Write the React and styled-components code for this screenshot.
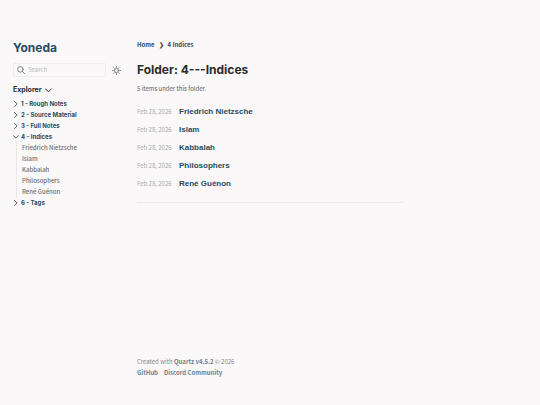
import React from "react";
import styled, { createGlobalStyle } from "styled-components";

const body = '"Noto Sans CJK SC", "Noto Sans", sans-serif';
const heading = 'Inter, "Liberation Sans", sans-serif';

const GlobalStyle = createGlobalStyle`
  * { box-sizing: border-box; }
  body { margin: 0; background: #faf8f8; color: #5c5b5b; font-family: ${body}; font-size: 6px; }
  a { color: inherit; text-decoration: none; }
  button, input { font: inherit; color: inherit; background: none; border: 0; padding: 0; margin: 0; }
  button { cursor: pointer; }
  ul { list-style: none; margin: 0; padding: 0; }
`;

const Page = styled.div`
  display: grid;
  grid-template-columns: 108px minmax(0, 1fr) 108px;
  gap: 16px;
  min-height: 100vh;
  padding: 0 13px;
`;

const Sidebar = styled.aside`
  display: flex;
  flex-direction: column;
  padding-top: 40px;
`;

const SiteTitle = styled.h2`
  margin: 0;
  font: 700 12px/16px ${heading};
  color: #284b63;
`;

const Tools = styled.div`
  display: flex;
  align-items: center;
  gap: 6px;
  margin-top: 7px;
`;

const SearchBox = styled.label`
  flex: 1;
  min-width: 0;
  display: flex;
  align-items: center;
  gap: 3px;
  height: 14px;
  padding: 0 3px;
  border: 1px solid #eeecec;
  border-radius: 2px;
  color: #6b6a6a;
`;

const SearchInput = styled.input`
  flex: 1;
  min-width: 0;
  font-size: 6px;
  line-height: 10px;
  outline: 0;
  &::placeholder { color: #b8b8b8; opacity: 1; }
`;

const IconButton = styled.button`
  display: flex;
`;

const ExplorerToggle = styled.button`
  display: flex;
  align-items: center;
  gap: 3px;
  align-self: flex-start;
  margin-top: 8px;
  font: 700 7px/10px ${heading};
  color: #2b2b2b;
`;

const Tree = styled.ul`
  margin-top: 3px;
`;

const Folder = styled.button`
  display: flex;
  align-items: center;
  gap: 2px;
  height: 11px;
  font: 700 6px/11px ${heading};
  color: #284b63;
`;

const Leaves = styled.ul`
  margin-left: 3px;
  padding-left: 5px;
  border-left: 1px solid #e9e7e7;
`;

const Leaf = styled.li`
  font-size: 6px;
  font-weight: 500;
  line-height: 11px;
  height: 11px;
  color: #717070;
`;

const Center = styled.main`
  display: flex;
  flex-direction: column;
  padding-top: 40px;
`;

const Crumbs = styled.nav`
  display: flex;
  gap: 4px;
  font-size: 6px;
  font-weight: 700;
  line-height: 10px;
  color: #284b63;
`;

const CrumbMark = styled.span`
  color: #4e4e4e;
`;

const PageTitle = styled.h1`
  margin: 12px 0 0;
  font: 700 12px/16px ${heading};
  color: #2b2b2b;
`;

const Count = styled.p`
  margin: 6px 0 0;
  line-height: 10px;
`;

const Listing = styled.ul`
  display: grid;
  gap: 8px;
  margin-top: 13px;
`;

const Entry = styled.li`
  display: grid;
  grid-template-columns: 36px 1fr;
  gap: 6px;
  align-items: center;
`;

const EntryDate = styled.time`
  line-height: 10px;
  white-space: nowrap;
  color: #a9a8a8;
`;

const EntryTitle = styled.h3`
  margin: 0;
  font: 700 8px/10px "Liberation Sans", sans-serif;
  color: #284b63;
`;

const Rule = styled.hr`
  width: 100%;
  height: 1px;
  margin: 13px 0 0;
  border: 0;
  background: #ebe9e9;
`;

const Footer = styled.footer`
  margin-top: auto;
  padding-bottom: 27px;
  line-height: 11px;
  color: #868585;
`;

const FooterText = styled.p`
  margin: 0;
`;

const FooterLink = styled.a`
  && { color: #6a8191; }
  font-weight: 700;
`;

const FooterLinks = styled.div`
  display: flex;
  gap: 6px;
`;

const Glyph = styled.svg`
  flex: none;
  fill: none;
  stroke: currentColor;
  stroke-linecap: round;
  stroke-linejoin: round;
`;

const Chevron = ({ open, size = 6 }) => (
  <Glyph width={size} height={size} viewBox="4 4 16 16" strokeWidth="2.2">
    <path d={open ? "M5 8l7 7 7-7" : "M8 5l7 7-7 7"} />
  </Glyph>
);

const folders = [
  { name: "1 - Rough Notes" },
  { name: "2 - Source Material" },
  { name: "3 - Full Notes" },
  { name: "4 - Indices", open: true },
  { name: "6 - Tags" },
];
const notes = ["Friedrich Nietzsche", "Islam", "Kabbalah", "Philosophers", "René Guénon"];

export default function App() {
  return (
    <>
      <GlobalStyle />
      <Page>
        <Sidebar>
          <SiteTitle><a href="#home">Yoneda</a></SiteTitle>
          <Tools>
            <SearchBox>
              <Glyph width="8" height="8" viewBox="0 0 20 20" strokeWidth="2">
                <circle cx="8.5" cy="8.5" r="7" />
                <path d="M13.5 13.5L19 19" />
              </Glyph>
              <SearchInput type="search" placeholder="Search" aria-label="Search" />
            </SearchBox>
            <IconButton aria-label="Toggle dark mode">
              <Glyph width="9" height="9" viewBox="0 0 24 24" strokeWidth="2">
                <circle cx="12" cy="12" r="5.5" />
                <path d="M12 1v2.5M12 20.5V23M1 12h2.5M20.5 12H23M4.2 4.2l1.8 1.8M18 18l1.8 1.8M4.2 19.8L6 18M18 6l1.8-1.8" />
              </Glyph>
            </IconButton>
          </Tools>
          <ExplorerToggle aria-expanded="true">
            Explorer <Chevron open size={7} />
          </ExplorerToggle>
          <Tree>
            {folders.map((f) => (
              <li key={f.name}>
                <Folder aria-expanded={!!f.open}>
                  <Chevron open={f.open} />
                  {f.name}
                </Folder>
                {f.open && (
                  <Leaves>
                    {notes.map((n) => (
                      <Leaf key={n}><a href="#note">{n}</a></Leaf>
                    ))}
                  </Leaves>
                )}
              </li>
            ))}
          </Tree>
        </Sidebar>
        <Center>
          <Crumbs aria-label="Breadcrumbs">
            <a href="#home">Home</a>
            <CrumbMark>❯</CrumbMark>
            <a href="#indices">4 Indices</a>
          </Crumbs>
          <PageTitle>Folder: 4---Indices</PageTitle>
          <Count>5 items under this folder.</Count>
          <Listing>
            {notes.map((n) => (
              <Entry key={n}>
                <EntryDate>Feb 28, 2026</EntryDate>
                <EntryTitle><a href="#note">{n}</a></EntryTitle>
              </Entry>
            ))}
          </Listing>
          <Rule />
          <Footer>
            <FooterText>
              Created with <FooterLink href="#quartz">Quartz v4.5.2</FooterLink> © 2026
            </FooterText>
            <FooterLinks>
              <FooterLink href="#github">GitHub</FooterLink>
              <FooterLink href="#discord">Discord Community</FooterLink>
            </FooterLinks>
          </Footer>
        </Center>
      </Page>
    </>
  );
}
